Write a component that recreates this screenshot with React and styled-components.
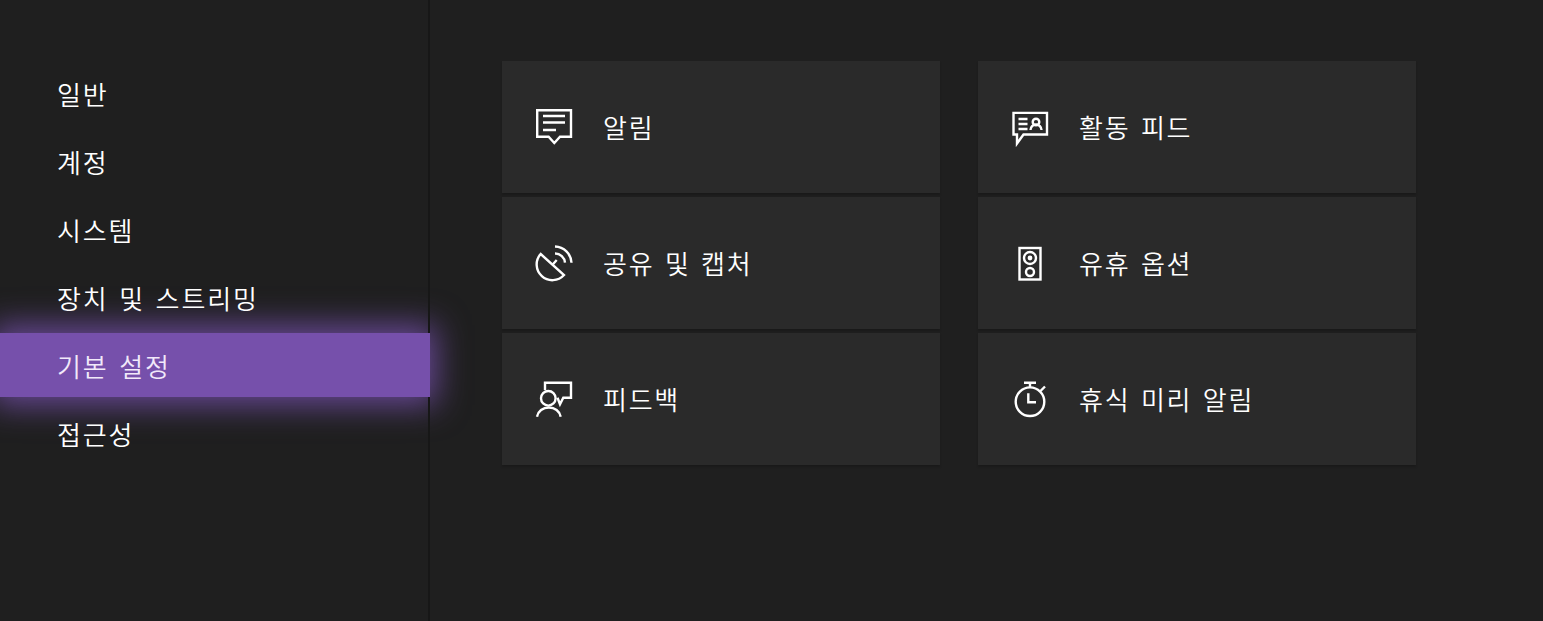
import React from 'react';
import styled, { createGlobalStyle } from 'styled-components';

const GlobalStyle = createGlobalStyle`
  html, body {
    margin: 0;
    padding: 0;
    height: 100%;
    background: #1f1f1f;
  }
`;

const Page = styled.div`
  width: 1543px;
  height: 621px;
  display: flex;
  overflow: hidden;
  background: #1f1f1f;
  color: #fff;
  font-family: 'Noto Sans CJK KR', 'Noto Sans', sans-serif;
  font-weight: 350;
`;

const Sidebar = styled.nav`
  width: 428px;
  flex-shrink: 0;
  padding-top: 61px;
  display: flex;
  flex-direction: column;
  gap: 4px;
`;

const Divider = styled.div`
  width: 2px;
  flex-shrink: 0;
  background: #171717;
  position: relative;
  z-index: 1;
`;

const NavItem = styled.div`
  height: 64px;
  padding-left: 57px;
  display: flex;
  align-items: center;
  position: relative;
  font-size: 26px;
  letter-spacing: 1.85px;
  word-spacing: 3px;
  color: ${p => (p.$active ? '#f1e9fa' : '#fff')};
  background: ${p => (p.$active ? '#7650ab' : 'transparent')};
  box-shadow: ${p => (p.$active ? '0 0 32px 8px rgba(118, 80, 171, 0.85)' : 'none')};

  ${p =>
    p.$active &&
    `
    &::after {
      content: '';
      position: absolute;
      top: 0;
      bottom: 0;
      right: -2px;
      width: 2px;
      background: #7650ab;
      z-index: 2;
    }
  `}
`;

const NavLabel = styled.span`
  position: relative;
  z-index: 1;
`;

const Content = styled.main`
  flex: 1;
  padding: 61px 0 0 72px;
`;

const TileGrid = styled.div`
  display: grid;
  grid-template-columns: repeat(2, 438px);
  grid-auto-rows: 132px;
  column-gap: 38px;
  row-gap: 4px;
`;

const Tile = styled.div`
  background: #2a2a2a;
  padding-left: 34px;
  display: flex;
  align-items: center;
  gap: 31px;
  font-size: 26px;
  letter-spacing: 1.75px;
  word-spacing: 3px;
  box-shadow: 0 2px 2px rgba(0, 0, 0, 0.18);
`;

const TileLabel = styled.span`
  margin-top: -1px;
`;

const IconBox = styled.svg`
  width: 36px;
  height: 36px;
  flex-shrink: 0;
  fill: none;
  stroke: #fff;
  stroke-width: 2.4;
  overflow: visible;
`;

const NoticeIcon = () => (
  <IconBox viewBox="0 0 36 36">
    <path d="M1.2 1.2H35V27.8H24L18.3 34L12.6 27.8H1.2Z" />
    <path d="M7 7H29M7 13.5H29M7 21H20" />
  </IconBox>
);

const ActivityIcon = () => (
  <IconBox viewBox="0 0 36 36">
    <path d="M1.5 3.9H35V25.5H11.5L5 34.5V25.5H1.5Z" />
    <path d="M6.5 10H15.5M6.5 15H15.5M6.5 20H15.5" />
    <circle cx="24" cy="13" r="3.3" />
    <path d="M18.5 21A5.5 5.5 0 0 1 29.5 21" />
  </IconBox>
);

const DishIcon = () => (
  <IconBox viewBox="0 0 36 36">
    <path d="M4.7 9A15.5 15.5 0 0 0 28 30Z" />
    <path d="M19 1.5A17 17 0 0 1 35.5 17.7M19 8.5A10 10 0 0 1 29 17.7M16.3 20L20.7 15" />
  </IconBox>
);

const SpeakerIcon = () => (
  <IconBox viewBox="0 0 36 36">
    <rect x="7.5" y="3" width="21" height="31.5" />
    <circle cx="18" cy="13" r="6" />
    <circle cx="18" cy="13" r="1.2" />
    <circle cx="18" cy="27" r="4" />
  </IconBox>
);

const FeedbackIcon = () => (
  <IconBox viewBox="0 0 36 36">
    <circle cx="12.3" cy="17.3" r="7.3" />
    <path d="M1 35.7A12 11 0 0 1 24.7 35.7" />
    <path d="M9 9V1.7H35V16.7H27.3L24 23.3L21.5 16.7" />
  </IconBox>
);

const TimerIcon = () => (
  <IconBox viewBox="0 0 36 36">
    <circle cx="18" cy="20.7" r="14.3" />
    <path d="M12 1.7H24M18 1.7V6.5M28.5 10L33 5.5M16.3 12.3V21.3H24" />
  </IconBox>
);

const navItems = ['일반', '계정', '시스템', '장치 및 스트리밍', '기본 설정', '접근성'];

const tiles = [
  { label: '알림', Icon: NoticeIcon },
  { label: '활동 피드', Icon: ActivityIcon },
  { label: '공유 및 캡처', Icon: DishIcon },
  { label: '유휴 옵션', Icon: SpeakerIcon },
  { label: '피드백', Icon: FeedbackIcon },
  { label: '휴식 미리 알림', Icon: TimerIcon }
];

export default function App() {
  return (
    <Page>
      <GlobalStyle />
      <Sidebar>
        {navItems.map(item => (
          <NavItem key={item} $active={item === '기본 설정'}>
            <NavLabel>{item}</NavLabel>
          </NavItem>
        ))}
      </Sidebar>
      <Divider />
      <Content>
        <TileGrid>
          {tiles.map(({ label, Icon }) => (
            <Tile key={label}>
              <Icon />
              <TileLabel>{label}</TileLabel>
            </Tile>
          ))}
        </TileGrid>
      </Content>
    </Page>
  );
}
